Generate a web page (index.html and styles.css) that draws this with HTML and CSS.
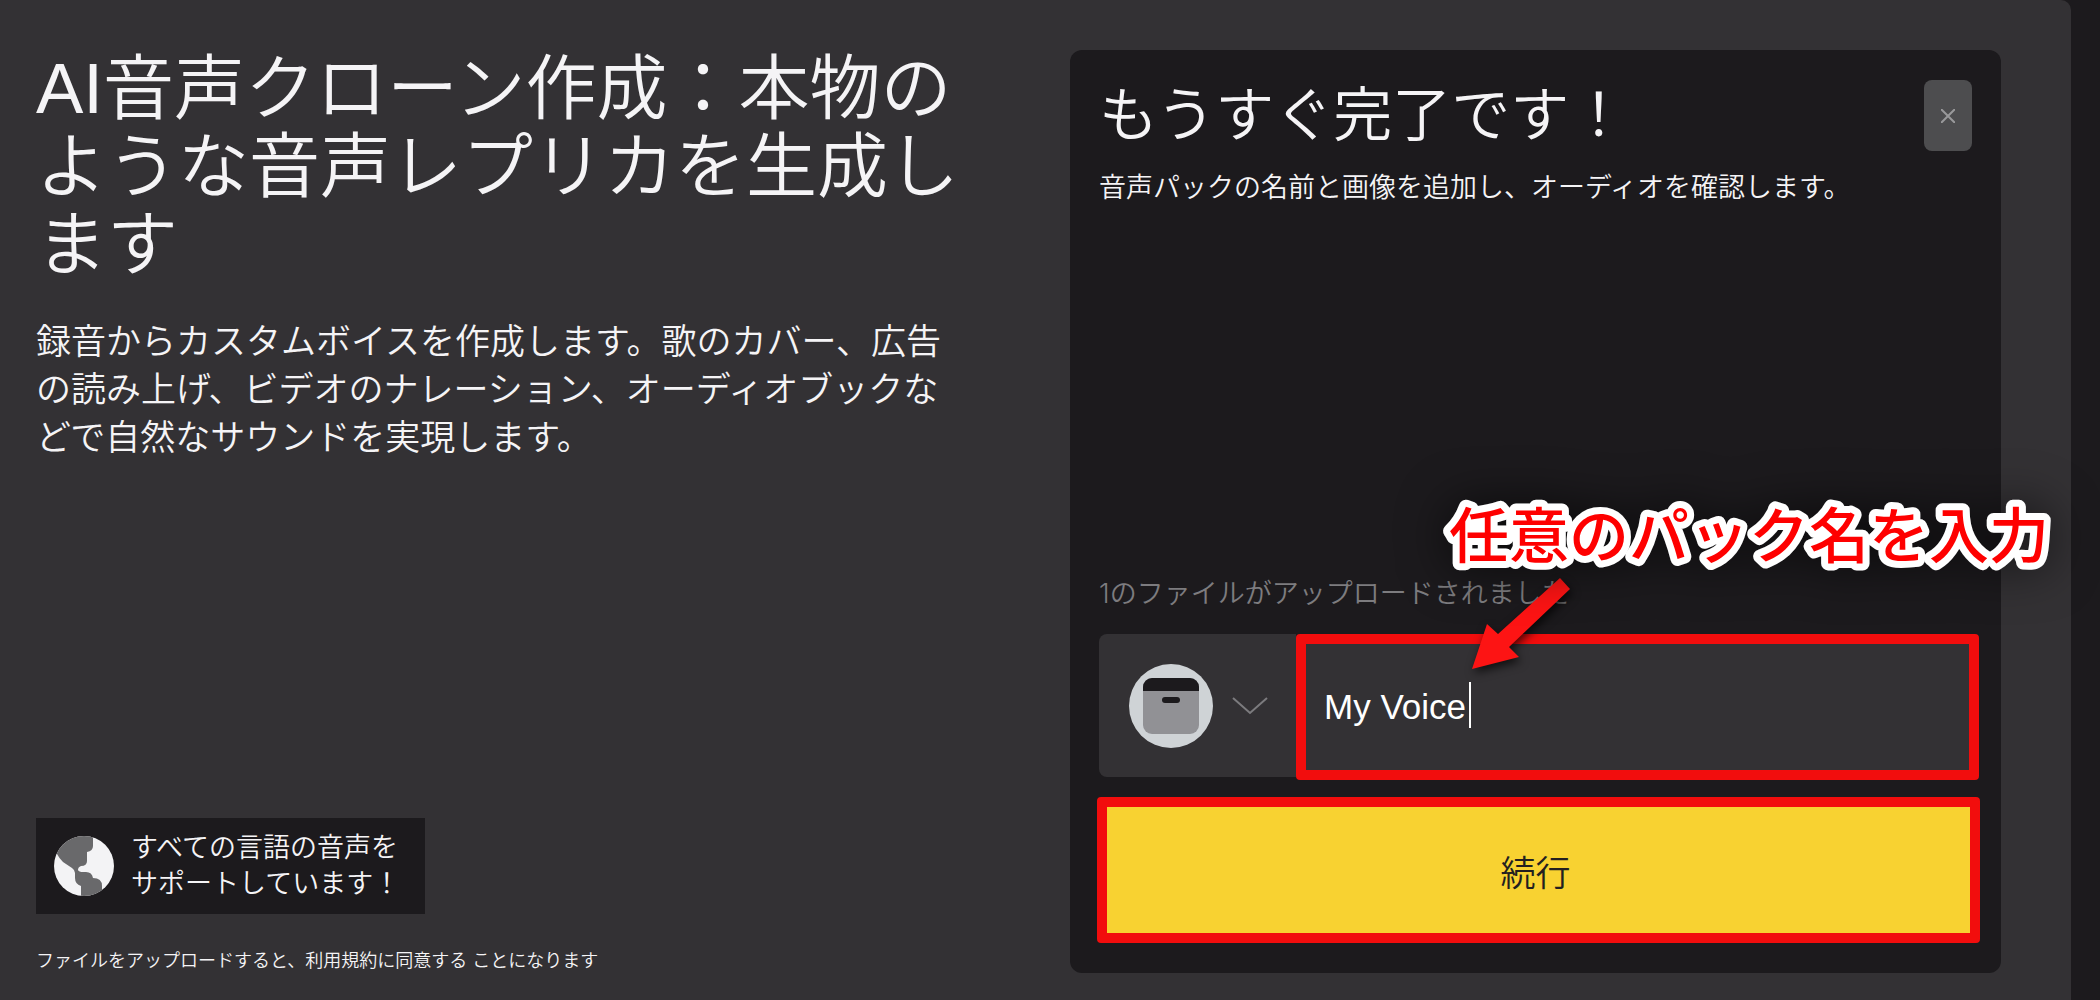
FILE: index.html
```html
<!DOCTYPE html>
<html lang="ja">
<head>
<meta charset="utf-8">
<meta name="viewport" content="width=device-width, initial-scale=1">
<title>AI音声クローン作成</title>
<link rel="stylesheet" href="styles.css">
</head>
<body>
<main class="panel">
  <section class="intro">
    <h1 class="intro-title">AI音声クローン作成：本物のような音声レプリカを生成します</h1>
    <p class="intro-text">録音からカスタムボイスを作成します。歌のカバー、広告の読み上げ、ビデオのナレーション、オーディオブックなどで自然なサウンドを実現します。</p>
    <div class="languages">
      <svg class="globe" viewBox="0 0 60 60" aria-hidden="true">
        <defs><clipPath id="disc"><circle cx="30" cy="30" r="30"/></clipPath></defs>
        <g clip-path="url(#disc)">
          <rect width="60" height="60" fill="#f3f3f5"/>
          <path fill="#69696b" d="M0 0H39V10Q39 15 33 16V25Q33 30 27 30Q24 31 24 34Q25 36 29 36H32Q38 36 39 42Q48 42 48 50V60H27V50Q21 48 21 42V37Q21 34 18 32L9 26Q5 22 3 18L0 14Z"/>
        </g>
      </svg>
      <p class="languages-text">すべての言語の音声を<br>サポートしています！</p>
    </div>
    <p class="terms">ファイルをアップロードすると、<a class="terms-link" href="#terms">利用規約に同意する</a> ことになります</p>
  </section>

  <section class="card">
    <header class="card-head">
      <h2 class="card-title">もうすぐ完了です！</h2>
      <button class="close" type="button" aria-label="閉じる">
        <svg width="14" height="14" viewBox="0 0 14 14" aria-hidden="true"><path d="M0 0L14 14M14 0L0 14" stroke="#99999b" stroke-width="2"/></svg>
      </button>
    </header>
    <p class="card-text">音声パックの名前と画像を追加し、オーディオを確認します。</p>
    <form class="form">
      <label class="status" for="pack-name">1のファイルがアップロードされました</label>
      <div class="name-row">
        <button class="avatar-button" type="button" aria-label="画像を選択">
          <svg class="avatar" viewBox="0 0 84 84" aria-hidden="true">
            <circle cx="42" cy="42" r="42" fill="#cfd3d6"/>
            <rect x="14" y="14" width="56" height="56" rx="9" fill="#919195"/>
            <path d="M14 27V23a9 9 0 0 1 9-9h38a9 9 0 0 1 9 9v4z" fill="#1c1a1d"/>
            <rect x="33" y="33" width="18" height="6" rx="3" fill="#1c1a1d"/>
          </svg>
          <svg width="36" height="18" viewBox="0 0 36 18" fill="none" aria-hidden="true"><path d="M1 1L18 16L35 1" stroke="#7c7b7e" stroke-width="2"/></svg>
        </button>
        <div class="name-field">
          <input class="name-input" id="pack-name" type="text" value="My Voice">
          <span class="caret"></span>
          <svg class="arrow" width="120" height="110" viewBox="0 0 120 110" aria-hidden="true"><path d="M6 97L21 52L32 62L94 6L104 17L43 75L53 85Z" fill="#fd1414"/></svg>
          <svg class="callout" width="620" height="86"><text class="callout-text" x="10" y="64">任意のパック名を入力</text></svg>
        </div>
      </div>
      <button class="submit" type="submit">続行</button>
    </form>
  </section>
</main>
</body>
</html>
```
FILE: styles.css
```css
* {
  box-sizing: border-box;
}

body {
  margin: 0;
  background: #1c1a1d;
  color: #f5f4f6;
  font-family: "Liberation Sans", "Noto Sans CJK JP", sans-serif;
  font-weight: 350;
  overflow-x: hidden;
}

h1, h2, p {
  margin: 0;
  font-weight: inherit;
}

button, input {
  font: inherit;
  color: inherit;
  margin: 0;
  border: 0;
}

.panel {
  display: grid;
  grid-template-columns: 1fr 1fr;
  column-gap: 103px;
  min-height: 100vh;
  margin-right: 29px;
  padding: 50px 70px 27px 36px;
  background: #333134;
  border-top-right-radius: 10px;
}

.intro {
  display: flex;
  flex-direction: column;
  align-items: flex-start;
}

.intro-title {
  font-size: 71px;
  line-height: 78px;
}

.intro-text {
  margin-top: 34px;
  font-size: 35px;
  line-height: 48px;
}

.languages {
  display: flex;
  align-items: center;
  gap: 17px;
  margin-top: auto;
  padding: 12px 25px 12px 18px;
  background: #1c1a1d;
}

.globe {
  width: 60px;
  height: 60px;
}

.languages-text {
  font-size: 27px;
  line-height: 36px;
  white-space: nowrap;
}

.terms {
  margin-top: 35px;
  font-size: 18px;
  line-height: 24px;
}

.terms-link {
  color: inherit;
  text-decoration: none;
}

.card {
  display: flex;
  flex-direction: column;
  padding: 30px 21px 30px 27px;
  background: #1c1a1d;
  border-radius: 12px;
}

.card-head {
  display: flex;
  align-items: center;
  justify-content: space-between;
  padding: 0 8px 0 2px;
}

.card-title {
  font-size: 59px;
  line-height: 68px;
}

.close {
  display: grid;
  place-items: center;
  width: 48px;
  height: 71px;
  padding: 0;
  background: #4d4d4f;
  border-radius: 8px;
}

.card-text {
  margin-top: 17px;
  padding-left: 2px;
  font-size: 27px;
  line-height: 40px;
}

.form {
  display: flex;
  flex-direction: column;
  margin-top: auto;
}

.status {
  padding-left: 2px;
  color: #7d7c7f;
  font-family: Inter, "Noto Sans CJK JP", sans-serif;
  font-size: 27px;
  line-height: 40px;
}

.name-row {
  display: flex;
  align-items: flex-start;
  margin: 20px 1px 17px 2px;
}

.avatar-button {
  display: flex;
  align-items: center;
  gap: 19px;
  height: 143px;
  padding: 0 28px 0 30px;
  background: #333134;
  border-radius: 8px 0 0 8px;
}

.avatar {
  width: 84px;
  height: 84px;
}

.name-field {
  position: relative;
  flex: 1;
}

.name-input {
  display: block;
  width: 100%;
  height: 146px;
  padding: 0 18px;
  background: #333134;
  border: 10px solid #f20d0d;
  border-radius: 4px;
  color: #fff;
  font-size: 35px;
  outline: 0;
}

.caret {
  position: absolute;
  top: 48px;
  left: 173px;
  width: 2px;
  height: 46px;
  background: #fff;
}

.arrow {
  position: absolute;
  top: -62px;
  left: 170px;
  filter: drop-shadow(2px 4px 5px rgba(0, 0, 0, 0.7));
}

.callout {
  position: absolute;
  top: -140px;
  left: 143px;
  overflow: visible;
  filter: drop-shadow(0 0 24px rgba(0, 0, 0, 0.6));
}

.callout-text {
  fill: #fe0000;
  stroke: #fff;
  stroke-width: 14px;
  stroke-linejoin: round;
  paint-order: stroke;
  font-family: "Noto Sans CJK JP", sans-serif;
  font-size: 60px;
  font-weight: 500;
}

.submit {
  height: 146px;
  padding: 0 6px 0 0;
  background: #f8d231;
  border: 10px solid #f20d0d;
  border-radius: 4px;
  color: #231f20;
  font-size: 35px;
}
```
